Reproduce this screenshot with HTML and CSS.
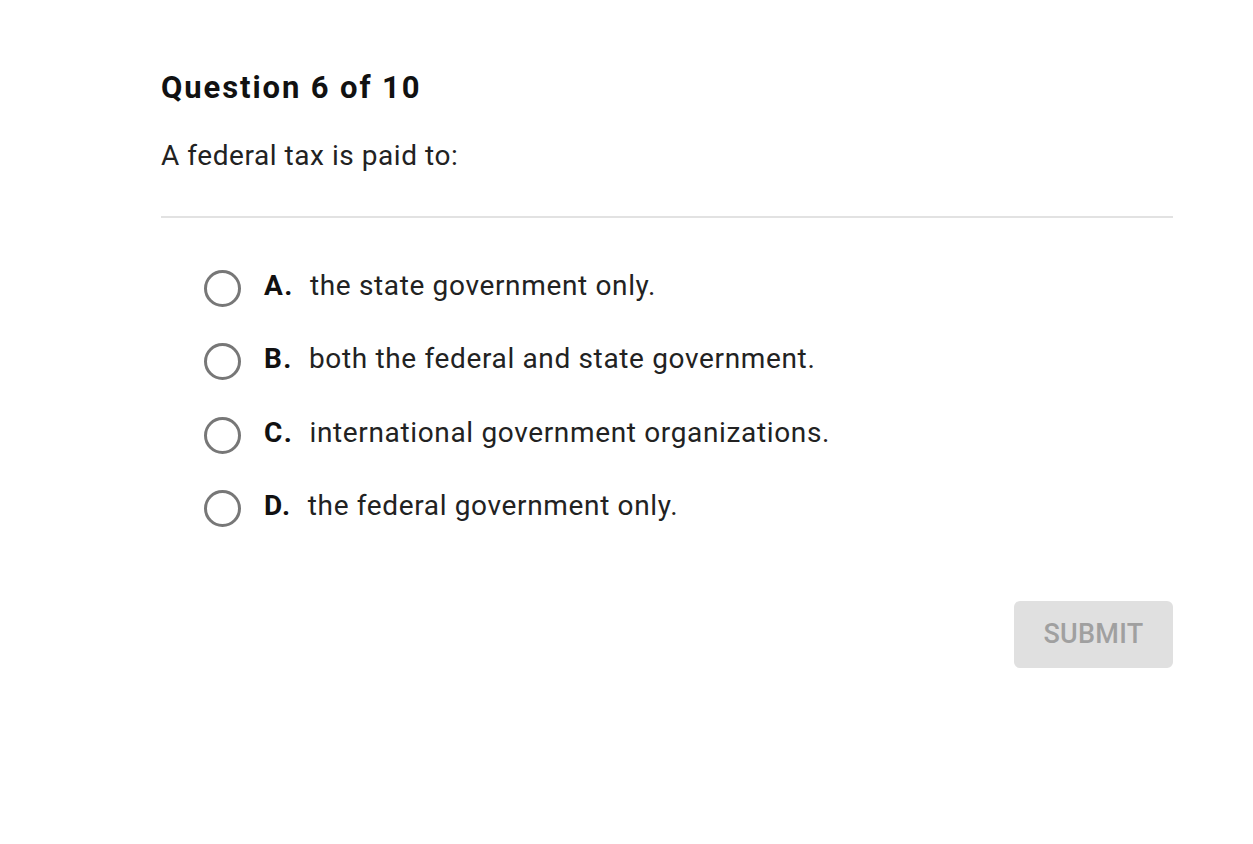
FILE: index.html
```html
<!DOCTYPE html>
<html>
<head>
<meta charset="utf-8">
<link rel="stylesheet" href="styles.css">
</head>
<body>
<div class="page">
  <h1 class="title">Question 6 of 10</h1>
  <p class="prompt">A federal tax is paid to:</p>
  <hr class="divider">
  <ul class="options">
    <li class="option"><span class="radio"></span><span class="letter">A.</span><span class="text">the state government only.</span></li>
    <li class="option"><span class="radio"></span><span class="letter">B.</span><span class="text">both the federal and state government.</span></li>
    <li class="option"><span class="radio"></span><span class="letter">C.</span><span class="text">international government organizations.</span></li>
    <li class="option"><span class="radio"></span><span class="letter">D.</span><span class="text">the federal government only.</span></li>
  </ul>
  <div class="actions"><button class="submit">SUBMIT</button></div>
</div>
</body>
</html>
```
FILE: styles.css
```css
* { box-sizing: border-box; }
html, body { margin: 0; padding: 0; background: #fff; }
body { font-family: Roboto, "Noto Sans", sans-serif; color: #212121; }
.page { width: 1253px; padding: 68px 80px 0 161px; }
.title { margin: 0; font-size: 31px; font-weight: 700; letter-spacing: 1.9px; line-height: 40px; color: #111; }
.prompt { margin: 28px 0 0; font-size: 28px; letter-spacing: 0.55px; line-height: 40px; color: #222; }
.divider { margin: 40px 0 0; border: 0; height: 2px; background: #e2e2e2; }
.options { list-style: none; margin: 47px 0 0; padding: 0 0 0 43px; display: flex; flex-direction: column; gap: 33.5px; }
.option { display: flex; align-items: center; height: 40px; font-size: 28px; letter-spacing: 0.65px; }
.radio { width: 37px; height: 37px; border: 3px solid #777; border-radius: 50%; flex: none; margin-right: 23px; position: relative; top: 3px; }
.letter { font-weight: 700; letter-spacing: 1.5px; margin-right: 16px; color: #111; }
.text { color: #222; }
.actions { display: flex; justify-content: flex-end; margin-top: 75px; }
.submit { font-family: Roboto, sans-serif; font-size: 27px; font-weight: 500; letter-spacing: 0.3px; color: #a0a0a0; background: #e0e0e0; border: 0; border-radius: 6px; width: 159px; height: 67px; padding: 0; }
```
